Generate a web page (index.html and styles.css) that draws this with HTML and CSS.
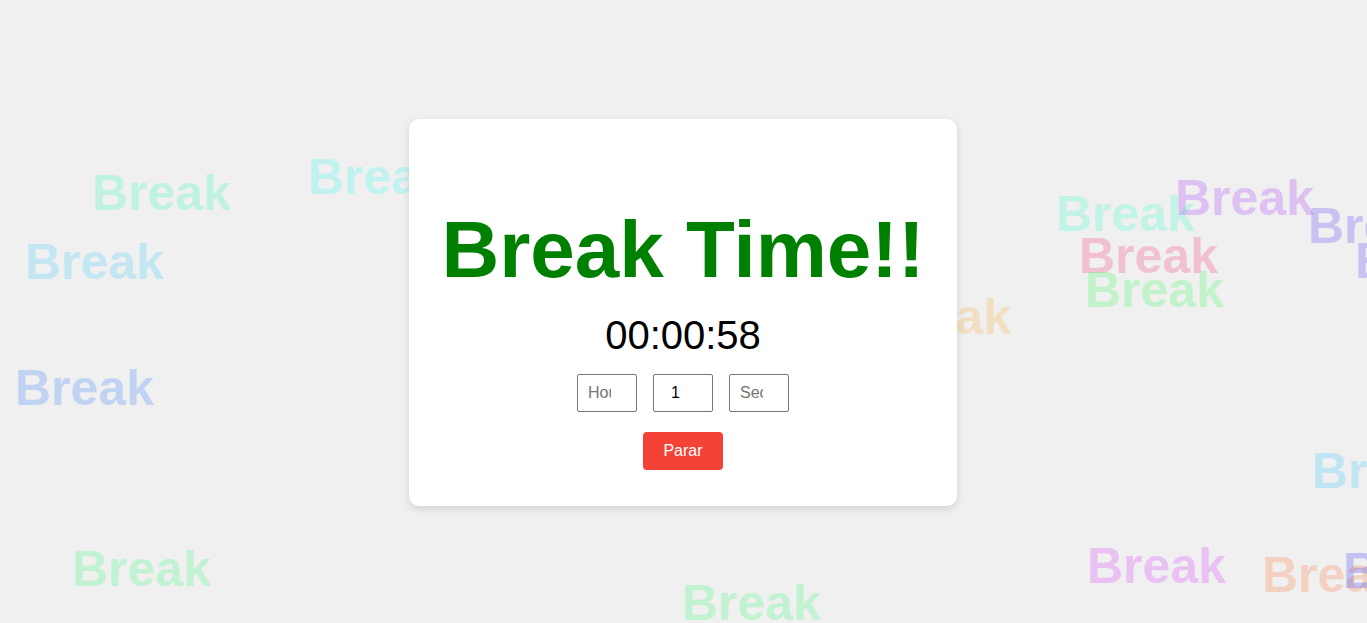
FILE: index.html
```html
<!DOCTYPE html>
<html lang="es">
<head>
<meta charset="utf-8">
<title>Break Time</title>
<link rel="stylesheet" href="styles.css">
</head>
<body>
<div class="bg">
  <span class="word" style="left:92px;top:168px;color:rgba(83,247,193,0.3)">Break</span>
  <span class="word" style="left:308px;top:152px;color:rgba(83,247,240,0.3)">Break</span>
  <span class="word" style="left:25px;top:237px;color:rgba(93,207,253,0.3)">Break</span>
  <span class="word" style="left:15px;top:363px;color:rgba(87,147,247,0.3)">Break</span>
  <span class="word" style="left:872px;top:292px;color:rgba(247,187,87,0.3)">Break</span>
  <span class="word" style="left:1056px;top:189px;color:rgba(87,253,207,0.3)">Break</span>
  <span class="word" style="left:1175px;top:173px;color:rgba(180,87,247,0.3)">Break</span>
  <span class="word" style="left:1308px;top:201px;color:rgba(113,87,247,0.3)">Break</span>
  <span class="word" style="left:1355px;top:236px;color:rgba(113,87,247,0.3)">Break</span>
  <span class="word" style="left:1079px;top:231px;color:rgba(247,87,140,0.3)">Break</span>
  <span class="word" style="left:1085px;top:265px;color:rgba(87,247,113,0.3)">Break</span>
  <span class="word" style="left:1312px;top:446px;color:rgba(87,207,253,0.3)">Break</span>
  <span class="word" style="left:1087px;top:541px;color:rgba(220,87,247,0.3)">Break</span>
  <span class="word" style="left:1262px;top:550px;color:rgba(247,140,87,0.3)">Break</span>
  <span class="word" style="left:1343px;top:546px;color:rgba(87,87,247,0.3)">Break</span>
  <span class="word" style="left:72px;top:544px;color:rgba(87,247,140,0.3)">Break</span>
  <span class="word" style="left:682px;top:578px;color:rgba(87,247,140,0.3)">Break</span>
</div>
<main class="card">
  <h1 class="title">Break Time!!</h1>
  <div class="timer">00:00:58</div>
  <div class="inputs">
    <input class="field" type="number" placeholder="Hours">
    <input class="field" type="number" placeholder="Minutes" value="1">
    <input class="field" type="number" placeholder="Seconds">
  </div>
  <button class="stop" type="button">Parar</button>
</main>
</body>
</html>
```
FILE: styles.css
```css
html, body {
  margin: 0;
  padding: 0;
}
body {
  height: 100vh;
  background: #f0f0f0;
  font-family: "Liberation Sans", Arial, sans-serif;
  display: flex;
  align-items: center;
  justify-content: center;
  overflow: hidden;
  position: relative;
}
.bg {
  position: absolute;
  inset: 0;
  overflow: hidden;
  z-index: 0;
}
.word {
  position: absolute;
  font-size: 50px;
  line-height: 50px;
  font-weight: bold;
  white-space: nowrap;
}
.card {
  position: relative;
  z-index: 1;
  box-sizing: border-box;
  width: 548px;
  height: 387px;
  margin-top: 2px;
  margin-right: 1px;
  background: #fff;
  border-radius: 10px;
  box-shadow: 0 3px 8px rgba(0, 0, 0, 0.12);
  padding: 85px 20px 0;
  display: flex;
  flex-direction: column;
  align-items: center;
}
.title {
  margin: 0 0 17px;
  font-size: 80px;
  font-weight: bold;
  color: #008000;
  white-space: nowrap;
}
.timer {
  margin: 0 0 16px;
  font-size: 40px;
  color: #000;
}
.inputs {
  display: flex;
  gap: 16px;
  margin-bottom: 20px;
}
.field {
  box-sizing: border-box;
  width: 60px;
  height: 38px;
  padding: 10px;
  border: 1px solid #767676;
  border-radius: 2px;
  font-family: "Liberation Sans", Arial, sans-serif;
  font-size: 16px;
  text-align: center;
  color: #000;
  background: #fff;
}
.field::placeholder {
  color: #757575;
}
.stop {
  box-sizing: border-box;
  width: 80px;
  height: 38px;
  padding: 0;
  border: none;
  border-radius: 4px;
  background: #f44336;
  color: #fff;
  font-family: "Liberation Sans", Arial, sans-serif;
  font-size: 16px;
  cursor: pointer;
}
```
